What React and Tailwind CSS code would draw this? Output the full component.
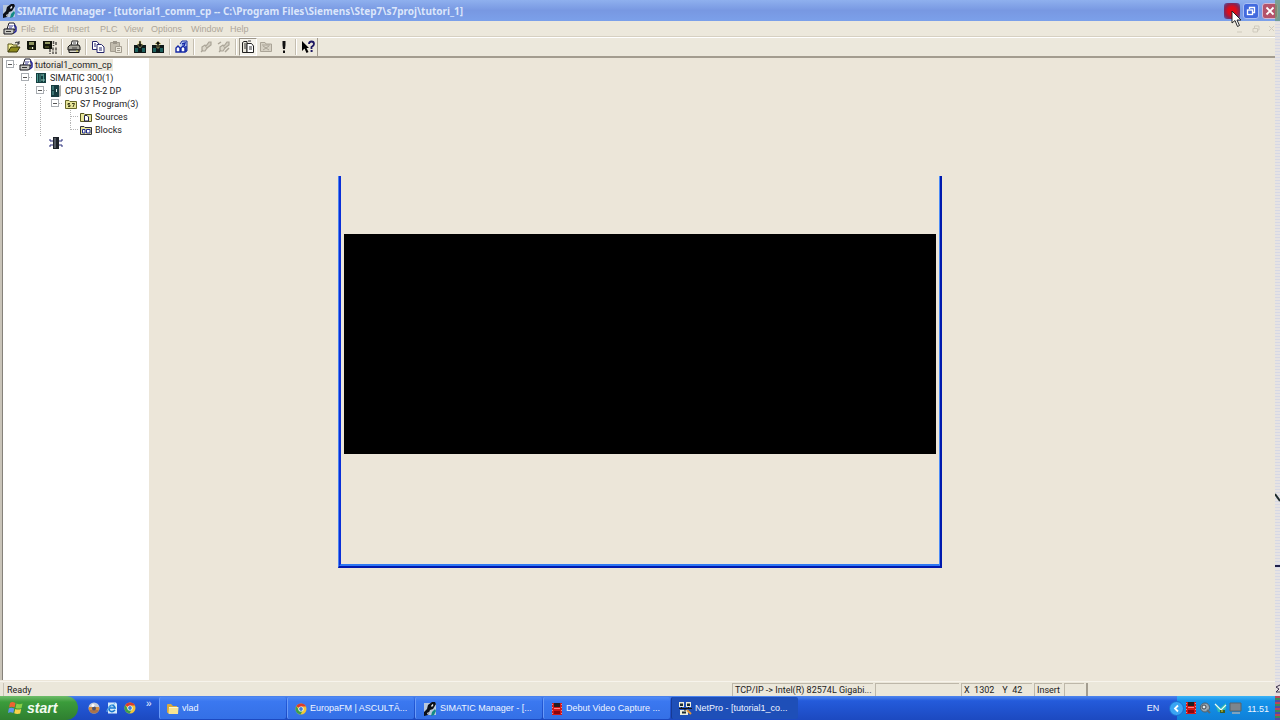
import React from "react";

function Svg({ w = 14, h = 14, children }) {
  return (
    <svg width={w} height={h} viewBox={`0 0 ${w} ${h}`} className="shrink-0" aria-hidden="true">
      {children}
    </svg>
  );
}

const AppIcon = () => (
  <Svg w={14} h={14}>
    <rect x="1" y="1" width="12" height="12" fill="#b9c8dc" />
    <path d="M1 14V10L4 7L5 3L9 0H12L13 2L10 7L7 8L5 13Z" fill="#0b0f18" />
    <path d="M8 4L9.500 2L10.500 3L9 5Z" fill="#f4f7fb" />
    <path d="M8 14L9 10L12 7L13 9L11 13Z" fill="#138a86" />
    <path d="M4 11L6 10L5 13Z" fill="#dfe6ee" />
  </Svg>
);

const ProjectIcon = () => (
  <Svg w={14} h={13}>
    <path d="M4 7L6 1H11L12 3V8Z" fill="#fff" stroke="#1b1b2b" />
    <path d="M1 7H11V11L9 12H1Z" fill="#c9c9c4" stroke="#15151c" />
    <path d="M11 3L13 5V9L11 11" fill="none" stroke="#25259a" strokeWidth="1.5" />
    <path d="M6 4H10M6 6H9" stroke="#3c3c90" />
    <path d="M3 9.5H8" stroke="#333" />
  </Svg>
);

const OpenIcon = () => (
  <Svg>
    <path d="M1 12V4H5L6 5H10V7" fill="#f7f39a" stroke="#59551a" />
    <path d="M1 12L4 7H13L10 12Z" fill="#8d8a1e" stroke="#38360c" />
    <path d="M8 3Q10 1 12 3M12 1V4H10" fill="none" stroke="#222" />
  </Svg>
);
const SaveIcon = () => (
  <Svg>
    <path d="M2 1H11V10H3L2 9Z" fill="#11140c" />
    <path d="M4 2H9V5H4Z" fill="#8f9560" />
    <path d="M4 7H9V9H4Z" fill="#3d421c" />
    <path d="M7 7H8V9H7Z" fill="#e7e7df" />
  </Svg>
);
const SaveBitsIcon = () => (
  <Svg w={16} h={14}>
    <path d="M1 1H10V9H2L1 8Z" fill="#11140c" />
    <path d="M3 2H8V4H3Z" fill="#8f9560" />
    <path d="M3 6H7V8H3Z" fill="#3d421c" />
    <path d="M11.500 1V6M14 2V6M8 9V14M11 7.500V14M14 7.500V14" stroke="#55534e" strokeWidth="1.500" strokeDasharray="3 1" />
  </Svg>
);
const PrintIcon = () => (
  <Svg>
    <path d="M4 6L5 1H11L10 6Z" fill="#fff" stroke="#222" />
    <path d="M1 7L3 5H12L13 7V10H1Z" fill="#a7a69e" stroke="#191919" />
    <path d="M2 10H12V12.500H2Z" fill="#d9d7cd" stroke="#191919" />
    <path d="M6 3H9M5 8H10" stroke="#444" />
    <path d="M9 11H11" stroke="#c7be2e" />
  </Svg>
);
const CopyIcon = () => (
  <Svg>
    <path d="M1.500 1.500H6L8 4V9.500H1.500Z" fill="#fff" stroke="#26266b" />
    <path d="M6 4.500H10.500L13 7V12.500H6Z" fill="#fff" stroke="#26266b" />
    <path d="M3 4H5M3 6H5M8 8H11M8 10H11" stroke="#26266b" />
  </Svg>
);
const PasteIcon = () => (
  <Svg>
    <path d="M1.500 2.500H10.500V11.500H1.500Z" fill="#c2bcae" stroke="#a39d90" />
    <path d="M4 1H8V4H4Z" fill="#9c968a" />
    <path d="M6.500 6.500H12.500V12.500H6.500Z" fill="#ece8dc" stroke="#a39d90" />
    <path d="M8 8.500H11M8 10.500H11" stroke="#a39d90" />
  </Svg>
);
const LoadIcon = ({ up }) => (
  <Svg>
    <path d="M1 5H13V13H1Z" fill="#0d1818" />
    <path d="M2 8H5V12H2ZM9 8H12V12H9Z" fill="#1c5f5c" />
    <path d={up ? "M7 1L10 4H8V8H6V4H4Z" : "M6 1H8V4H10L7 8L4 4H6Z"} fill="#111" stroke="#d6cf7a" strokeWidth=".5" />
  </Svg>
);
const NetIcon = () => (
  <Svg>
    <path d="M5 4L7 1H12V11H6" fill="#b8cbf2" stroke="#1b2f9c" />
    <path d="M1 12V8L3 6L5 8V12ZM6 12V8L8 6L10 8V12Z" fill="#fff" stroke="#1428a5" strokeWidth="1.400" />
    <path d="M7 4L10 3L9 6M11 6V12" stroke="#1428a5" strokeWidth="1.400" fill="none" />
  </Svg>
);
const LinkIcon = ({ split }) => (
  <Svg>
    <path d="M2 12L4 10M3 7L6 5L8 8L6 11L3 11Z" fill="#dcd7ca" stroke="#aaa497" strokeWidth="1.200" />
    <path d="M7 6L10 2H12V5L8 8" fill="#d1ccbf" stroke="#aaa497" strokeWidth="1.200" />
    {split && <path d="M8 12L12 8M1 4L4 2" stroke="#aaa497" strokeWidth="1.500" />}
  </Svg>
);
const CatalogIcon = () => (
  <Svg>
    <path d="M1.500 2.500L3 1.500H6V12.500H1.500Z" fill="#e9e7dc" stroke="#202020" />
    <path d="M6 3.500H10.500L12.500 6V12.500H6Z" fill="#fff" stroke="#202020" />
    <path d="M3 4H5M3 6H5M3 8H5M8 7H11M8 9H11" stroke="#333" />
    <path d="M7 1H10" stroke="#333" />
  </Svg>
);
const FolderOffIcon = () => (
  <Svg>
    <path d="M1.500 2.500H6L7 4H12.500V11.500H1.500Z" fill="#d6d1c4" stroke="#aaa497" />
    <path d="M4 6L10 10M10 6L4 10M3 5H11" stroke="#aaa497" />
  </Svg>
);
const BangIcon = () => (
  <Svg>
    <path d="M5.500 1H8.500V5L8 9H6L5.500 5Z" fill="#101010" />
    <rect x="6" y="10.500" width="2" height="2.500" fill="#101010" />
  </Svg>
);
const WhatsThisIcon = () => (
  <Svg w={16} h={14}>
    <path d="M2 1V11L4.500 8.500L6.500 13L8.500 12L6.500 8H9Z" fill="#000" />
    <path d="M9 4Q9 1.500 11.500 1.500Q14 1.500 14 4Q14 5.500 11.500 7V9" fill="none" stroke="#1d1763" strokeWidth="1.800" />
    <rect x="10.600" y="10" width="2" height="2" fill="#1d1763" />
  </Svg>
);

const StationIcon = () => (
  <Svg w={12} h={12}>
    <path d="M1 1H11V11H1Z" fill="#163f40" />
    <path d="M2.500 2V10M5 2V10M8.500 2V10" stroke="#4e9a91" />
    <path d="M6 3H8M6 8H10" stroke="#8fbdb2" />
  </Svg>
);
const CpuIcon = () => (
  <Svg w={12} h={12}>
    <path d="M1 0H9V12H1Z" fill="#173c40" />
    <path d="M9 1L11 0V11L9 12Z" fill="#a9aaa7" />
    <path d="M2 2H4M2 4H4M3 6V10" stroke="#65aaa4" />
    <path d="M6.500 4V7" stroke="#dbeee9" />
  </Svg>
);
const ProgramIcon = () => (
  <Svg w={12} h={12}>
    <path d="M.500 2.500H4L5 3.500H11.500V10.500H.500Z" fill="#e8e69a" stroke="#67672a" />
    <path d="M5 5.500H3V7H5V8.500H3M7 5.500H9.500L8 9" fill="none" stroke="#3c3c18" />
  </Svg>
);
const SourcesIcon = () => (
  <Svg w={12} h={12}>
    <path d="M.500 2.500H4L5 3.500H11.500V10.500H.500Z" fill="#e9e79a" stroke="#55551e" />
    <path d="M4.500 4.500H7L8.500 6V10H4.500Z" fill="#fff" stroke="#25254d" />
  </Svg>
);
const BlocksIcon = () => (
  <Svg w={12} h={12}>
    <path d="M.500 2.500H4L5 3.500H11.500V10.500H.500Z" fill="#e9e79a" stroke="#33333a" />
    <path d="M2.500 5.500H5V9H2.500ZM6.500 5.500H10V9H6.500Z" fill="#fff" stroke="#1f2a93" />
  </Svg>
);
const ChipIcon = () => (
  <Svg w={14} h={12}>
    <path d="M4 0H10V12H4Z" fill="#1d2229" />
    <path d="M6 1V11" stroke="#88909c" />
    <path d="M1 2V4H4M1 10V8H4M13 2V4H10M13 10V8H10" fill="none" stroke="#2b2f7c" />
  </Svg>
);

const ChromeIcon = () => (
  <Svg w={12} h={12}>
    <circle cx="6" cy="6" r="5.500" fill="#f0c63a" />
    <path d="M6 6L1.200 3.300A5.500 5.500 0 0 1 11 3.500L6 3.600Z" fill="#d93c2f" />
    <path d="M1.200 3.300A5.500 5.500 0 0 0 5.500 11.500L8 7L4 7Z" fill="#3c9f4e" />
    <circle cx="6" cy="6" r="2.600" fill="#fff" />
    <circle cx="6" cy="6" r="1.900" fill="#3f7fd8" />
  </Svg>
);
const BallIcon = () => (
  <Svg w={12} h={12}>
    <circle cx="6" cy="6" r="5.500" fill="#c9cfd8" />
    <path d="M.500 6H11.500A5.500 5.500 0 0 1 .500 6" fill="#a8734c" />
    <path d="M1 5H11V8H1Z" fill="#d88f3e" />
    <circle cx="6" cy="6.500" r="2" fill="#4a5472" />
    <circle cx="5" cy="3.500" r="1.500" fill="#fff" />
  </Svg>
);
const BrowserIcon = () => (
  <Svg w={12} h={12}>
    <path d="M2 .500H10L11 2V11.500H2Z" fill="#d8ebfa" />
    <path d="M9 8Q6 11 3.500 8.500Q2 5 5 3.500Q8 2.500 9 6H4" fill="none" stroke="#1777cf" strokeWidth="1.700" />
    <path d="M1 10Q0 6 9 1.500" fill="none" stroke="#64b4ee" />
  </Svg>
);
const FolderIcon = () => (
  <Svg w={12} h={12}>
    <path d="M0 2Q0 1 1 1H4L6 3H10V10H1Q0 10 0 9Z" fill="#d8a93d" />
    <path d="M2 4H11.500L11 11H1.500Z" fill="#f8e391" />
    <path d="M2 4.500H11" stroke="#fff6c8" />
  </Svg>
);
const DebutIcon = () => (
  <Svg w={12} h={12}>
    <path d="M1 0H11V12H1Z" fill="#d41818" />
    <path d="M3 0H9V4H3Z" fill="#281b20" />
    <path d="M1.500 1V11M10.500 1V11" stroke="#e98a8a" strokeDasharray="1 2" />
    <path d="M3 8H9V11H3Z" fill="#8a0710" />
    <path d="M3 5.500H9" stroke="#ff8282" />
  </Svg>
);
const NetProIcon = () => (
  <Svg w={13} h={13}>
    <path d="M0 0H5V5H0ZM7 0H12V5H7ZM1 8H9V13H1Z" fill="#ededdc" />
    <path d="M1 1.500H4V4H1ZM8 1.500H11V4H8ZM3 9.500H7V11.500H3Z" fill="#1c2b32" />
    <path d="M0 6.500H13M2.500 5V7M9.500 5V7M6 7V9" stroke="#151515" />
    <path d="M8 8L12 12" stroke="#e39435" strokeWidth="2" />
  </Svg>
);
const StartFlag = () => (
  <Svg w={16} h={14}>
    <path d="M2 2Q4 0 7.500 2L6.500 6.500Q3.500 5 1 6.500Z" fill="#ed6332" />
    <path d="M8.500 2.500Q11 4 14.500 2.500L13.500 7Q10.500 8 7.500 7Z" fill="#8bce48" />
    <path d="M.800 7.500Q3 6 6.300 7.500L5.300 12Q2.500 10.500 0 12Z" fill="#5c97ee" />
    <path d="M7.300 8Q10 9.200 13.200 8L12.200 12.500Q9 13.500 6.200 12.300Z" fill="#f7d34a" />
  </Svg>
);

const menus = [
  ["File", "w-[22px]"],
  ["Edit", "w-[24px]"],
  ["Insert", "w-[33px]"],
  ["PLC", "w-[24px]"],
  ["View", "w-[27px]"],
  ["Options", "w-[40px]"],
  ["Window", "w-[39px]"],
  ["Help", "w-[24px]"],
];

const toolGroups = [
  [["Open", <OpenIcon />], ["Save", <SaveIcon />], ["Save and compile", <SaveBitsIcon />]],
  [["Print", <PrintIcon />]],
  [["Copy", <CopyIcon />], ["Paste", <PasteIcon />]],
  [["Download", <LoadIcon />], ["Upload", <LoadIcon up />]],
  [["Configure network", <NetIcon />]],
  [["Connect", <LinkIcon />], ["Disconnect", <LinkIcon split />]],
  [["Catalog", <CatalogIcon />, true], ["Close folder", <FolderOffIcon />], ["Check", <BangIcon />]],
  [["What's this", <WhatsThisIcon />]],
];

function TitleBar() {
  return (
    <header className="flex h-[21px] shrink-0 items-center bg-linear-to-b from-[#8fb0ee] via-[#7898e2] to-[#7ba0ea] pl-[2px] pr-[2px]">
      <AppIcon />
      <h1 className="ml-px flex-1 truncate font-['Noto_Sans',sans-serif] text-[10px] font-bold leading-[14px] text-[#dbe6fb]">
        SIMATIC Manager - [tutorial1_comm_cp -- C:\Program Files\Siemens\Step7\s7proj\tutori_1]
      </h1>
      <div className="flex items-center gap-[3px]">
        <button aria-label="Minimize" className="h-4 w-4 rounded-[3px] bg-[radial-gradient(circle,#e00c18_35%,#8a2350_65%,#4f5fb4_100%)]" />
        <button aria-label="Restore" className="flex h-4 w-4 items-center justify-center rounded-[3px] border border-[#a9bff4] bg-[#426ade]">
          <Svg w={10} h={10}>
            <path d="M3.500 3V1.500H8.500V6.500H7" fill="none" stroke="#fff" strokeWidth="1.300" />
            <rect x="1.500" y="4" width="5" height="4.500" fill="none" stroke="#fff" strokeWidth="1.300" />
          </Svg>
        </button>
        <button aria-label="Close" className="flex h-4 w-4 items-center justify-center rounded-[3px] border border-[#d3b7d2] bg-[#b4536b]">
          <Svg w={10} h={10}>
            <path d="M1.500 1.500L8.500 8.500M8.500 1.500L1.500 8.500" stroke="#fff" strokeWidth="1.800" />
          </Svg>
        </button>
      </div>
    </header>
  );
}

function MenuBar() {
  return (
    <nav className="flex h-4 shrink-0 items-center border-b border-[#d6d0c2] bg-[#ece8dc] pl-[3px] pr-1 text-[9px] text-[#aca699]">
      <ProjectIcon />
      <div className="ml-1 flex flex-1">
        {menus.map(([name, width]) => (
          <button key={name} className={`${width} shrink-0 text-left leading-3`}>
            {name}
          </button>
        ))}
      </div>
      <div className="flex gap-2 text-[#cfcabd]">
        <Svg w={8} h={8}><path d="M1 7H6" stroke="currentColor" /></Svg>
        <Svg w={8} h={8}><path d="M2.500 3V1H7V5H5.500M1 3.500H5.500V7H1Z" fill="none" stroke="currentColor" /></Svg>
        <Svg w={8} h={8}><path d="M1 1L6 6M6 1L1 6" stroke="currentColor" /></Svg>
      </div>
    </nav>
  );
}

function ToolBar() {
  return (
    <div role="toolbar" className="flex h-[21px] shrink-0 items-center border-b-2 border-t border-b-[#a39c8f] border-t-white bg-[#ece8dc] pl-[5px]">
      {toolGroups.map((group, i) => (
        <div key={i} className="flex items-center">
          {i > 0 && <div className="ml-[2px] mr-[2px] h-4 w-[2px] border-l border-r border-l-[#c4beb0] border-r-white" />}
          {group.map(([label, icon, pressed]) => (
            <button
              key={label}
              aria-label={label}
              className={`flex h-[18px] w-[18px] items-center justify-center ${
                pressed ? "border border-b-white border-l-[#9d978a] border-r-white border-t-[#9d978a] bg-[#f5f3ec]" : ""
              }`}
            >
              {icon}
            </button>
          ))}
        </div>
      ))}
      <div className="h-full w-px bg-[#a39c8f]" />
    </div>
  );
}

function TreeRow({ icon, label, open, selected, leaf, last }) {
  return (
    <div className="flex h-[13px] items-center">
      <span className="flex w-[15px] shrink-0 items-center justify-center">
        {open && (
          <Svg w={15} h={9}>
            <path d="M11 4.500H15" stroke="#b5b5b5" strokeDasharray="1 1" />
            <rect x="3.500" y=".500" width="7" height="7" fill="#fff" stroke="#a9adb2" />
            <path d="M5 4.500H9" stroke="#555" />
          </Svg>
        )}
        {leaf && (
          <Svg w={15} h={13}>
            <path d={last ? "M7.500 0V7M8 6.500H15" : "M7.500 0V13M8 6.500H15"} fill="none" stroke="#b5b5b5" strokeDasharray="1 1" />
          </Svg>
        )}
      </span>
      <span className="flex w-[15px] shrink-0 justify-center">{icon}</span>
      <span className={`ml-px whitespace-nowrap px-px leading-[12px] ${selected ? "bg-[#ece8dc]" : ""}`}>{label}</span>
    </div>
  );
}

function Branch({ guide, children }) {
  return (
    <div className="flex">
      <div className="flex w-[15px] shrink-0 justify-center">
        {guide && <div className="w-px border-l border-dotted border-[#b0b0b0]" />}
      </div>
      <div className="min-w-0 flex-1">{children}</div>
    </div>
  );
}

function ProjectTree() {
  return (
    <aside className="flex w-[149px] shrink-0 overflow-hidden bg-white font-['Roboto','Liberation_Sans',sans-serif] text-[9px] text-[#222]">
      <div className="w-[3px] shrink-0 border-r border-[#85817a] bg-[#c9c4b9]" />
      <div className="flex-1">
        <TreeRow open selected icon={<ProjectIcon />} label="tutorial1_comm_cp" />
        <Branch>
          <TreeRow open icon={<StationIcon />} label="SIMATIC 300(1)" />
          <Branch guide>
            <TreeRow open icon={<CpuIcon />} label="CPU 315-2 DP" />
            <Branch guide>
              <TreeRow open icon={<ProgramIcon />} label="S7 Program(3)" />
              <Branch>
                <TreeRow leaf icon={<SourcesIcon />} label="Sources" />
                <TreeRow leaf last icon={<BlocksIcon />} label="Blocks" />
              </Branch>
            </Branch>
          </Branch>
          <Branch>
            <TreeRow icon={<ChipIcon />} label="" />
          </Branch>
        </Branch>
      </div>
    </aside>
  );
}

function StatusBar() {
  const cell = "flex h-[13px] items-center whitespace-nowrap border-l border-t border-[#bdb7a9] pl-[2px]";
  return (
    <footer className="flex h-[15px] shrink-0 items-center border-t border-[#f7f4ec] bg-[#ebe7da] pl-[3px] pr-[5px] font-['Roboto','Liberation_Sans',sans-serif] text-[9px] leading-[12px] text-[#1c1c1c]">
      <span className="flex-1 border-l border-[#c9c3b5] pl-[3px] pt-px">Ready</span>
      <div className="flex gap-[2px]">
        <span className={`${cell} w-[141px]`}>TCP/IP -&gt; Intel(R) 82574L Gigabi...</span>
        <span className={`${cell} w-[84px]`} />
        <span className={`${cell} w-[71px] gap-2`}>
          <span>X&nbsp; 1302</span>
          <span>Y&nbsp; 42</span>
        </span>
        <span className={`${cell} w-[28px]`}>Insert</span>
        <span className={`${cell} w-[20px]`} />
        <span className="h-[13px] w-[189px] border-l-2 border-[#a39d90]" />
      </div>
    </footer>
  );
}

const tasks = [
  ["vlad", <FolderIcon />],
  ["EuropaFM | ASCULTĂ...", <ChromeIcon />],
  ["SIMATIC Manager - [...", <AppIcon />],
  ["Debut Video Capture ...", <DebutIcon />],
  ["NetPro - [tutorial1_co...", <NetProIcon />, true],
];

function TaskBar() {
  return (
    <footer className="flex h-6 shrink-0 items-stretch bg-linear-to-b from-[#4f86ee] via-[#245bdb] via-20% to-[#1c49c0] pr-[5px] text-[9px] text-[#eef4ff]">
      <button className="flex w-[78px] shrink-0 items-center gap-[3px] rounded-r-xl bg-linear-to-b from-[#6fbd6b] via-[#3b9c3b] via-25% to-[#2f7f30] pl-2 text-[14px] font-bold italic text-[#f3fbf0]">
        <StartFlag />
        start
      </button>
      <div className="flex w-[81px] shrink-0 items-center gap-[6px] pl-[10px]">
        <button aria-label="Media player"><BallIcon /></button>
        <button aria-label="Browser"><BrowserIcon /></button>
        <button aria-label="Chrome"><ChromeIcon /></button>
        <button aria-label="More" className="mb-2 ml-[4px] text-[10px] leading-[10px]">»</button>
      </div>
      <div className="flex flex-1 gap-px">
        {tasks.map(([label, icon, active]) => (
          <button
            key={label}
            className={`my-px flex w-[127px] items-center gap-[3px] rounded-[2px] border-l pl-[7px] pt-px text-left ${
              active ? "border-[#173a94] bg-[#1e4fb8]" : "border-[#6a9bf8] bg-linear-to-b from-[#4f8af5] via-[#3b78f0] via-20% to-[#3470e6]"
            }`}
          >
            {icon}
            <span className="truncate">{label}</span>
          </button>
        ))}
      </div>
      <div className="flex items-center">
        <button className="mr-[10px] pt-px">EN</button>
        <button aria-label="Show hidden icons" className="z-10 -mr-[7px]">
          <Svg w={15} h={15}>
            <circle cx="7.500" cy="7.500" r="7" fill="#3aa5f3" stroke="#1b6ad0" />
            <path d="M9 4.500L6 7.500L9 10.500" fill="none" stroke="#fff" strokeWidth="1.800" />
          </Svg>
        </button>
        <div className="flex h-full items-center gap-[2px] bg-linear-to-b from-[#3cb4f6] via-[#1493ea] via-20% to-[#0f80d8] pl-2 pr-[6px]">
          <DebutIcon />
          <Svg w={13} h={12}>
            <circle cx="6" cy="5.500" r="4.500" fill="#98a7b2" stroke="#4e5d69" />
            <circle cx="5" cy="5" r="2" fill="#e7edf0" stroke="#3a444e" />
            <path d="M8 8L11 11" stroke="#5d6972" strokeWidth="2" />
          </Svg>
          <Svg w={13} h={12}>
            <path d="M1 1L6 6L12 1V7L8 10H4Z" fill="#2dbab5" />
            <path d="M1 2L7 8L12 3" fill="none" stroke="#f2f7f2" strokeWidth="1.200" />
            <path d="M6 8H11V11H6Z" fill="#3b5a23" />
            <path d="M7 9H9" stroke="#f0df3b" />
          </Svg>
          <Svg w={13} h={12}>
            <path d="M1 1H12V9H1Z" fill="#7d858c" stroke="#5a6268" />
            <path d="M3 11H11" stroke="#a2adb5" strokeWidth="1.500" />
          </Svg>
          <time className="ml-[3px] pt-px leading-[12px]">11.51</time>
        </div>
      </div>
    </footer>
  );
}

export default function App() {
  return (
    <div className="relative flex h-screen flex-col overflow-hidden bg-[#ece6d9] font-['Liberation_Sans',Arial,sans-serif]">
      <TitleBar />
      <MenuBar />
      <ToolBar />
      <main className="relative flex min-h-0 flex-1">
        <ProjectTree />
        <section className="flex-1 bg-[#ece6d9]" />
        <div className="pointer-events-none absolute inset-0 flex items-center justify-center pt-[6px]">
          <div className="flex h-[392px] w-[604px] border-b-2 border-l border-r-2 border-b-[#0019ae] border-l-[#4d83ef] border-r-[#0019ae]">
            <div className="flex-1 border-b-2 border-l-2 border-r border-b-[#2e78f4] border-l-[#0a2fd8] border-r-[#4d8cf8] px-[3px] pt-[58px]">
              <div className="h-[220px] bg-black" />
            </div>
          </div>
        </div>
      </main>
      <div className="h-px shrink-0 bg-[#ece6d9]" />
      <StatusBar />
      <TaskBar />

      {/* neighbouring monitor edge */}
      <div className="pointer-events-none absolute bottom-0 right-0 top-0 flex w-[5px] flex-col">
        <div className="h-[21px] bg-[#6f9d70]/70" />
        <div className="relative flex-1 bg-[repeating-linear-gradient(to_bottom,#d6d8e4_0px,#d6d8e4_1px,#e7e3e2_1px,#e7e3e2_3px)]">
          <svg width="5" height="76" viewBox="0 0 5 76" className="absolute right-0 top-[471px]" aria-hidden="true">
            <path d="M0 2L5 9" stroke="#1d2b2b" strokeWidth="2" />
            <path d="M0 74H5" stroke="#20204a" strokeWidth="2" />
          </svg>
        </div>
        <div className="flex h-[14px] items-center overflow-hidden bg-[#e6dfe0] text-[9px] text-[#222]">
          <Svg w={5} h={10}><path d="M5 1L1 3L4 5L1 8H5" fill="none" stroke="#3a3048" /></Svg>
        </div>
        <div className="h-6 bg-[repeating-linear-gradient(to_bottom,#b8455c_0px,#b8455c_2px,#3f8a55_2px,#3f8a55_4px,#4c4fa8_4px,#4c4fa8_6px)]" />
      </div>

      {/* mouse pointer */}
      <svg width="11" height="18" viewBox="0 0 11 18" className="pointer-events-none absolute right-[38px] top-[10px]" aria-hidden="true">
        <path d="M1 1V13L4 10.500L6.500 16.500L8.500 15.500L6 10H10Z" fill="#fff" stroke="#222" />
      </svg>
    </div>
  );
}
